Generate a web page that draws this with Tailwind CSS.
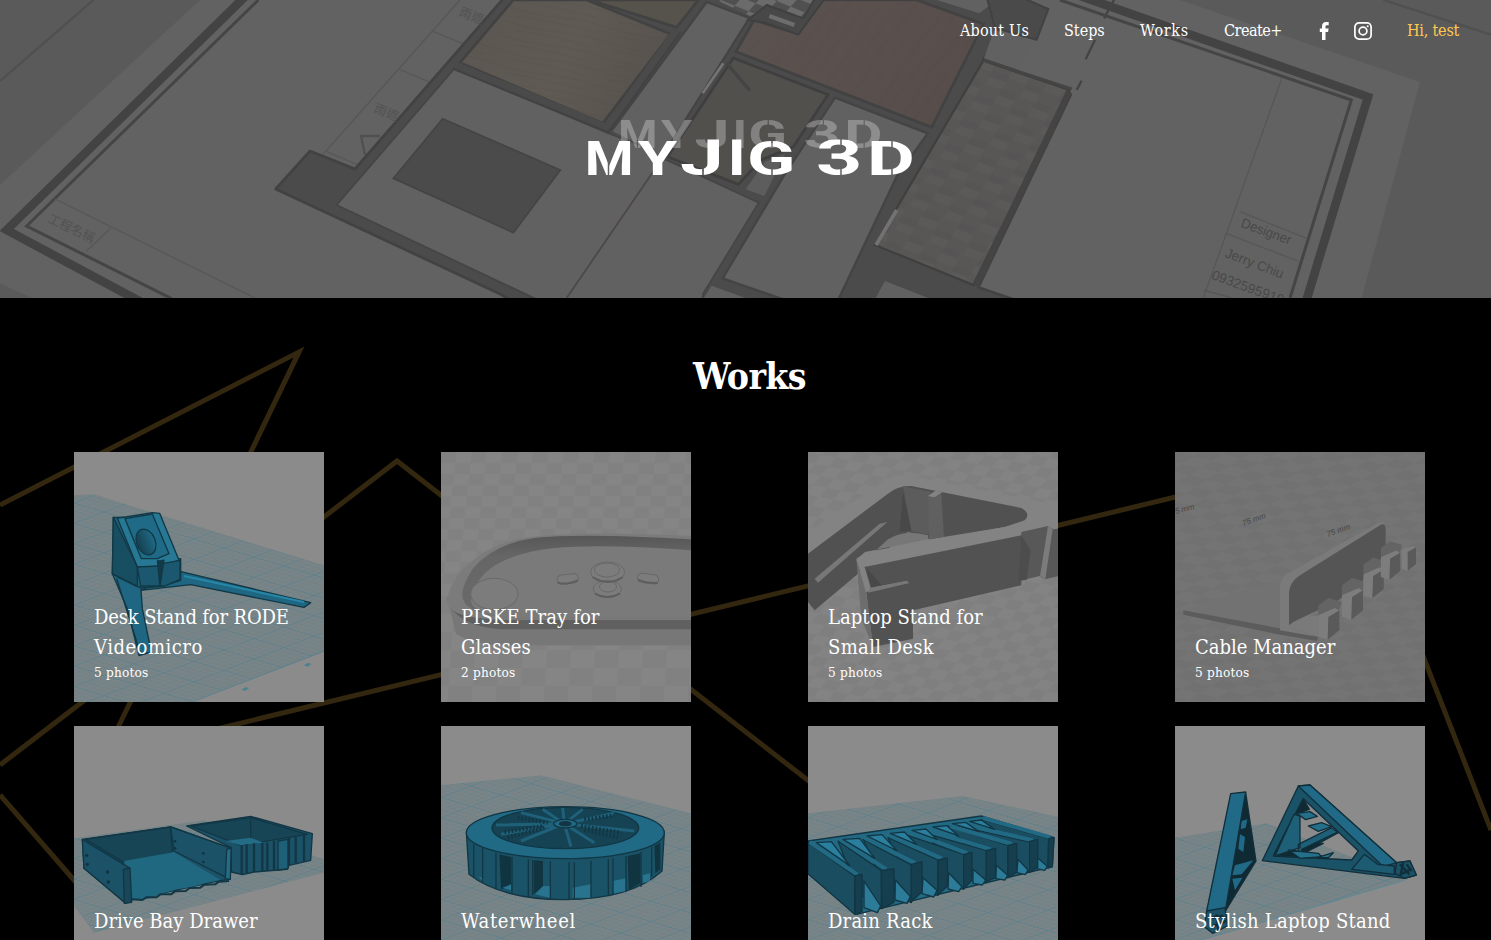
<!DOCTYPE html>
<html lang="en">
<head>
<meta charset="utf-8">
<title>MYJIG 3D - Works</title>
<script src="https://cdn.jsdelivr.net/npm/@tailwindcss/browser@4"></script>
</head>
<body class="bg-black text-white overflow-hidden h-[940px] font-['Roboto_Slab','DejaVu_Serif_Condensed','DejaVu_Serif',serif]">
<header class="relative h-[298px] overflow-hidden bg-[#626262]">
  <svg class="absolute inset-0" width="1491" height="298" viewBox="0 0 4473 894" fill="none">
    <defs>
      <linearGradient id="red" x1="0" y1="0" x2="1" y2=".4"><stop stop-color="#59534f"/><stop offset=".5" stop-color="#5a504d"/><stop offset="1" stop-color="#574d4b"/></linearGradient>
      <linearGradient id="oak" x1="0" y1="0" x2="1" y2=".3"><stop stop-color="#5b5651"/><stop offset=".6" stop-color="#5f5a54"/><stop offset="1" stop-color="#58534e"/></linearGradient>
      <pattern id="brick" width="110" height="84" patternUnits="userSpaceOnUse" patternTransform="rotate(20) skewX(-12)"><path fill="#595756" d="M0 0h110v84H0z"/><path fill="#5c5a59" d="M0 0h54v26H0zM60 42h50v24H60z"/><path fill="#565454" d="M56 20h54v20H56zM0 62h50v22H0z"/></pattern>
      <pattern id="grain" width="300" height="44" patternUnits="userSpaceOnUse" patternTransform="rotate(12)"><path stroke="#514a43" stroke-opacity=".16" stroke-width="6" d="M0 10q80 10 150 0t150 0M30 32q100-8 230 0"/></pattern>
      <pattern id="streak" width="300" height="80" patternUnits="userSpaceOnUse" patternTransform="rotate(-55)"><path stroke="#50423e" stroke-opacity=".09" stroke-width="14" d="M0 14q80 10 150 0t150 0M30 56q100-8 230 0"/></pattern>
      <pattern id="tile" width="90" height="60" patternUnits="userSpaceOnUse" patternTransform="rotate(22) skewX(-20)"><path fill="#6b6b6b" d="M0 0h90v60H0z"/><path fill="#505050" d="M0 0h45v30H0zM45 30h45v30H45z"/></pattern>
    </defs>
    <path fill="#5a5a5a" d="M0 0H600L0 555zM0 850l95 44H0zM3520 0H4473V894H4085L4260 246 3540 0z"/>
    <path stroke="#505050" stroke-width="7" d="M0 243L280 0M4150 0l323 104"/>
    <path stroke="#434343" stroke-width="26" d="M735-10L20 690 440 915M3240-12L4104 291 3918 905"/>
    <path stroke="#454545" stroke-width="9" d="M775 0L80 678 515 896M3180 0L4054 300 3870 894"/>
    <path stroke="#575757" stroke-width="4" d="M165 597l600 297M332 685l-72 68M1380 0L970 462M1300 94l95 40M1196 207l95 40M980 455l95 40M3845 236L3610 894M3720 635l200 80M3678 700l215 83M3610 870l90 25M3070 110l-50 90"/>
    <path stroke="#505050" stroke-width="7" d="M1140 408h-57l12 56"/>
    <!-- wall mass -->
    <path fill="#4b4b4b" stroke="#424242" stroke-width="8" stroke-linejoin="round" d="M930 453L827 567 1500 882 1540 905H3060L2935 862 3212 285 3200 266 2950 178 3010 70 3000-10H1515L1065 507z"/>
    <!-- living room and halls -->
    <path fill="#616161" stroke="#454545" stroke-width="5" d="M1363 206L1825 400 1990 465 1700 905H1625L1010 615z"/>
    <path fill="#616161" stroke="#454545" stroke-width="5" d="M1995 478L2276 608 2110 880 2105 905H1690L1975 475z"/>
    <path fill="#616161" d="M1800 395L2000 465 1700 900 1500 800z"/>
    <path fill="url(#oak)" stroke="#424242" stroke-width="8" d="M1540 0H1760L2012 102 1808 370 1380 188z"/>
    <path fill="url(#grain)" d="M1540 0H1760L2012 102 1808 370 1380 188z"/>
    <path fill="#56524c" stroke="#424242" stroke-width="8" d="M1770 0H2095L2030 82z"/>
    <path stroke="#4a4a4a" stroke-width="24" d="M1365 196L1822 384 2030 92"/>
    <path stroke="#424242" stroke-width="6" d="M1358 206L1825 397 2042 96"/>
    <path fill="#616161" d="M2120 6L2248 54 1988 468 1835 392z"/>
    <path stroke="#444" stroke-width="7" d="M1835 392L2120 6 2248 54 1988 468"/>
    <path fill="#52504d" stroke="#403f3f" stroke-width="8" d="M2200 174L2484 284 2380 440 2282 480 2215 553 2003 470z"/>
    <path stroke="#747474" stroke-width="8" d="M2170 190l-62 90"/>
    <path stroke="#444" stroke-width="10" d="M2180 190l70 82"/>
    <path fill="url(#red)" stroke="#424242" stroke-width="8" d="M2262 60L2390 100 2465 0H2750L2950 72 2795 382 2208 155z"/>
    <path fill="url(#streak)" d="M2465 0H2750L2950 72 2795 382 2208 155z"/>
    <path fill="url(#tile)" d="M2150 0H2440L2400 60 2310 20 2250 48z"/>
    <path fill="#484848" stroke="#404040" stroke-width="6" d="M2245 60L2300 15 2410 55 2445-5 2475-5 2395 104 2295 68z"/>
    <path stroke="#6d6d6d" stroke-width="12" d="M2308 48l75 27"/>
    <path fill="#616161" stroke="#444" stroke-width="7" d="M2505 293L2783 400 2690 530 2512 905H2370L2168 835 2350 530z"/>
    <path fill="#5d5d5d" d="M2295 485l60-22-62 125-56-20z"/>
    <path fill="#616161" d="M2135 857l110 40h-135zM2655 843l140 55h-170zM2810 0h180l-52 40z"/>
    <path fill="url(#brick)" stroke="#404040" stroke-width="7" d="M2950 182L3208 270 2920 855 2625 735z"/>
    <path fill="#4a4a4a" stroke="#424242" stroke-width="6" d="M2960-10h100l85 37-35 92-125-35z"/>
    <path fill="#616161" d="M2982 90l120 34-50 85-100-35z"/>
    <path stroke="#454545" stroke-width="9" d="M2950 180L3215 267"/>
    <path stroke="#444" stroke-width="18" d="M3207 275L2928 858"/>
    <path stroke="#727272" stroke-width="11" d="M2690 630l-62 105"/>
    <path stroke="#4c4646" stroke-width="5" d="M1990 470L1700 894"/>
    <path stroke="#444" stroke-width="7" d="M3342 0l-30 55M3285 120l-28 58M3245 242l-15 28"/>
    <path fill="#4b4b4b" stroke="#444" stroke-width="5" d="M1328 356L1681 510 1540 698 1180 535z"/>
    <g fill="#494949" font-family="Liberation Sans, sans-serif" font-size="41">
      <text transform="translate(3720 680) rotate(20)" textLength="158" lengthAdjust="spacingAndGlyphs">Designer</text>
      <text transform="translate(3673 770) rotate(21)" textLength="184" lengthAdjust="spacingAndGlyphs">Jerry Chiu</text>
      <text transform="translate(3632 836) rotate(20)" textLength="228" lengthAdjust="spacingAndGlyphs">0932595919</text>
    </g>
    <g fill="#525252" font-family="Noto Sans CJK TC, sans-serif" font-size="38">
      <text transform="translate(140 665) rotate(25)">工程名稱</text>
      <text transform="translate(1120 335) rotate(22)">雨遮</text>
      <text transform="translate(1375 45) rotate(22)">雨遮</text>
    </g>
  </svg>
  <nav class="relative flex h-[61px] items-center justify-end pr-8 text-[16px]">
    <a class="mr-[35px] w-[69px] whitespace-nowrap tracking-[0.2px]">About Us</a>
    <a class="mr-[35px] w-[41px] whitespace-nowrap">Steps</a>
    <a class="mr-[35px] w-[49px] whitespace-nowrap tracking-[0.7px]">Works</a>
    <a class="mr-[38px] w-[57px] whitespace-nowrap tracking-[-0.5px]">Create+</a>
    <svg class="mr-6" width="11" height="18" viewBox="0 0 11 18" fill="white"><path d="M3 18V10H.8V6.6H3V4.3C3 1.5 4.6 0 7.2 0H9.7V3.3H8C6.9 3.3 6.5 3.8 6.5 4.8V6.6H9.6L9.1 10H6.5V18z"/></svg>
    <svg class="mr-[35px]" width="18" height="18" viewBox="0 0 18 18" fill="none" stroke="white" stroke-width="1.7"><rect x=".9" y=".9" width="16.2" height="16.2" rx="4.2"/><circle cx="9" cy="9" r="3.9"/><circle cx="13.7" cy="4.3" r="1" fill="white" stroke="none"/></svg>
    <a class="w-[52px] whitespace-nowrap text-[#ffc84f] tracking-[-0.2px]">Hi, test</a>
  </nav>
  <svg class="absolute left-[588px] top-[110px]" width="335" height="76" fill="white" font-family="Roboto, sans-serif" font-weight="700" font-size="49">
    <defs>
      <mask id="stencil" maskUnits="userSpaceOnUse" x="-5" y="-40" width="340" height="50">
        <path fill="#fff" d="M-5-35.5h340V1H-5z"/>
        <path stroke="#000" stroke-width="1.5" d="M20.5-36V2M115-12V2M184-37v12M184-12V2M253-37v12M253-12V2M304-37v12M304-12V2"/>
      </mask>
      <g id="logo" mask="url(#stencil)">
        <text transform="translate(-3.3) scale(1.14 1)">M</text>
        <text transform="translate(50) scale(1.29 1)">Y</text>
        <text transform="translate(92) scale(1.6 1)">J</text>
        <text transform="translate(139.500) scale(1.28 1)">I</text>
        <text transform="translate(159) scale(1.45 1)">G</text>
        <text transform="translate(228) scale(1.65 1)">3</text>
        <text transform="translate(279) scale(1.5 1)">D</text>
      </g>
    </defs>
    <use href="#logo" transform="translate(33 38) scale(.8)" opacity=".28"/>
    <use href="#logo" transform="translate(0 65)"/>
  </svg>
</header>
<main class="relative h-[642px] overflow-hidden">
  <svg class="absolute inset-0" width="1491" height="642" viewBox="0 298 1491 642" fill="none" stroke="#33270f" stroke-width="5">
    <path d="M0 505L299 352 112 740M0 765L397 461 850 813M200 733L1345 456 1491 830M0 795L100 910"/>
  </svg>
  <div class="relative">
    <h1 class="pt-[50px] pl-[8px] text-center text-[37px] leading-[56px] font-bold tracking-[-0.6px]">Works</h1>
    <svg width="0" height="0" class="absolute">
      <defs>
        <pattern id="grid" width="90" height="90" patternUnits="userSpaceOnUse" patternTransform="matrix(1 .3 -1 .38 0 0)"><path fill="#7a8486" stroke="none" d="M0 0h90v90H0z"/><path stroke="#54808e" stroke-width="3" fill="none" d="M0 45h90M45 0v90"/><path stroke="#668189" stroke-width="1.7" fill="none" d="M0 9h90M0 27h90M0 63h90M0 81h90M9 0v90M27 0v90M63 0v90M81 0v90"/></pattern>
        <pattern id="check" width="92" height="66" patternUnits="userSpaceOnUse" patternTransform="skewX(-6)"><path fill="#858585" d="M0 0h92v66H0z"/><path fill="#818181" d="M0 0h46v33H0zM46 33h46v33H46z"/></pattern>
        <pattern id="checkbig" width="144" height="108" patternUnits="userSpaceOnUse" patternTransform="skewX(-4)"><path fill="#858585" d="M0 0h144v108H0z"/><path fill="#818181" d="M0 0h72v54H0zM72 54h72v54H72z"/></pattern>
        <pattern id="checkb" width="84" height="84" patternUnits="userSpaceOnUse" patternTransform="matrix(1 .2 -.55 .65 0 0)"><path fill="#838383" d="M0 0h84v84H0z"/><path fill="#7f7f7f" d="M0 0h42v42H0zM42 42h42v42H42z"/></pattern>
        <pattern id="checkc" width="110" height="84" patternUnits="userSpaceOnUse" patternTransform="matrix(1 .25 -.8 .5 0 0)"><path fill="#747474" d="M0 0h110v84H0z"/><path fill="#717171" d="M0 0h55v42H0zM55 42h55v42H55z"/></pattern>
        <linearGradient id="lip" x1="0" y1="0" x2="0" y2="1"><stop stop-color="#575757"/><stop offset=".25" stop-color="#666"/><stop offset="1" stop-color="#6a6a6a"/></linearGradient>
        <linearGradient id="hole"><stop stop-color="#153f4f"/><stop offset="1" stop-color="#1f6a86"/></linearGradient>
      </defs>
    </svg>
    <section class="ml-[74px] mt-[48px] grid w-[1351px] grid-cols-[repeat(4,250px)] justify-between gap-y-6">
      <article class="relative flex h-[250px] flex-col justify-end overflow-hidden bg-[#8b8b8b] p-5">
        <svg class="absolute inset-0" width="250" height="250" viewBox="0 0 750 750" fill="#1e6681" stroke="#123846" stroke-width="4" stroke-linejoin="round">
          <path fill="url(#grid)" stroke="none" d="M0 130L60 127 750 340V600L355 750H0z"/><path stroke="#4d808f" stroke-width="2" d="M355 750L750 597"/>
          <g stroke="none" fill="#4d808f"><path d="M690 640l12-8 10 4-12 8zM503 713l12-8 10 4-12 8z"/></g>
          <path d="M318 358L710 452 690 466 350 398 200 415z"/><path stroke="#2787a8" d="M330 372L690 450" stroke-width="6"/>
          <path d="M115 365L200 400 205 470 232 600 195 611 160 470z"/><path fill="none" d="M128 380l70 220"/>
          <path fill="#184e61" d="M118 196L190 402 115 365z"/><path fill="#1d5f78" d="M118 196L155 196 230 340 320 320V385L265 402 205 408 185 402 130 375z"/>
          <path fill="#267895" d="M130 198L155 195 235 182 257 184 315 325 250 345 190 345z"/>
          <path fill="#184e61" d="M118 196L190 345V402L115 365z"/><path fill="#1f6a86" d="M153 200L202 320 250 320 285 305 235 186z"/>
          <ellipse cx="216" cy="270" rx="28" ry="40" transform="rotate(-22 216 270)" fill="url(#hole)"/>
          <path fill="#1b5870" d="M190 345L250 342 265 335 318 325V382L272 402H200z"/><path d="M250 325l8 78 12-80" fill="#123a49"/>
        </svg>
        <h2 class="relative text-[20px] leading-[30px] tracking-[-0.15px] whitespace-nowrap">Desk Stand for RODE<br><span class="tracking-[0.5px]">Videomicro</span></h2>
        <p class="relative text-[13.5px] leading-5 tracking-[0.2px]">5 photos</p>
      </article>
      <article class="relative flex h-[250px] flex-col justify-end overflow-hidden bg-[#858585] p-5">
        <svg class="absolute inset-0" width="250" height="250" viewBox="0 0 750 750" fill="none">
          <path fill="url(#check)" d="M0 0h750v400H0z"/><path fill="url(#checkbig)" d="M0 400h750v350H0z"/>
          <path fill="#777" d="M20 440L45 545Q100 585 260 580H750V480z"/><path fill="#606060" d="M18 440Q40 520 180 532H750V480z"/>
          <path fill="#7b7b7b" d="M750 252Q420 235 260 256 130 275 50 370 0 450 30 470 60 505 240 504H750z"/>
          <path fill="url(#lip)" d="M750 262Q420 242 280 258 160 275 95 350 50 420 70 450 90 490 240 500H750z"/>
          <path fill="#7a7a7a" d="M750 295Q480 275 340 288 190 305 130 365 75 430 95 460 120 495 240 500H750z"/>
          <g fill="#7c7c7c" stroke="#696969" stroke-width="3"><ellipse cx="160" cy="426" rx="71" ry="47"/><ellipse cx="500" cy="361" rx="51" ry="31"/><ellipse cx="498" cy="354" rx="38" ry="21"/><ellipse cx="499" cy="411" rx="42" ry="26"/><ellipse cx="501" cy="404" rx="26" ry="16"/><rect x="348" y="367" width="64" height="28" rx="14" transform="rotate(-7 380 380)"/><rect x="589" y="366" width="64" height="28" rx="14" transform="rotate(7 620 380)"/></g>
          <path stroke="#5e5e5e" stroke-width="6" d="M350 391q20 10 60-6M592 383q25 12 58 10M455 375q45 30 90 0M462 425q35 20 75 0"/>
        </svg>
        <h2 class="relative text-[20px] leading-[30px] tracking-[0.1px] whitespace-nowrap">PISKE Tray for<br>Glasses</h2>
        <p class="relative text-[13.5px] leading-5 tracking-[0.2px]">2 photos</p>
      </article>
      <article class="relative flex h-[250px] flex-col justify-end overflow-hidden bg-[#808080] p-5">
        <svg class="absolute inset-0" width="250" height="250" viewBox="0 0 750 750">
          <path fill="url(#checkb)" d="M0 0h750v750H0z"/>
          <path fill="#838383" d="M0 240L240 80Q270 65 310 72L750 160V230L640 245 175 420 145 320 0 310z"/>
          <path fill="#515151" d="M0 305L240 125Q270 100 310 102L640 168Q670 185 650 205L590 225 365 262 300 240 150 365 20 475 0 450z"/>
          <path fill="#777" d="M240 262Q290 230 360 250V262L170 300 145 325 150 345z"/>
          <path fill="#5c5c5c" d="M285 103L370 120 362 247 310 238z"/><path fill="#484848" d="M285 120L310 235 275 240z"/><path fill="#606060" d="M360 130l40-6 8 130-45 8z"/><path fill="#838383" d="M360 132l22-16 22 4-25 16z"/>
          <path fill="#777" d="M20 380L215 215 238 210 30 392z"/>
          <path fill="#838383" d="M145 320L175 300 620 220 645 248 170 345 185 415 175 425z"/>
          <path fill="#525252" d="M170 345L640 250V400L315 475V560L195 585 175 420 300 392 298 386 188 408z"/>
          <path fill="#6d6d6d" d="M145 320L175 425 195 585 160 500z"/><path fill="#484848" d="M175 348l45 50-30 8z"/><path fill="#777" d="M185 408L295 387 305 393 180 422z"/>
          <path fill="#585858" d="M640 240L720 222 735 232 750 230V373L710 382 695 372 632 387z"/><path fill="#4d4d4d" d="M640 250l28 45-12 88-25 4z"/><path fill="#7b7b7b" d="M720 222l14 10-22 150-16-10z"/>
        </svg>
        <h2 class="relative text-[20px] leading-[30px] whitespace-nowrap">Laptop Stand for<br><span class="tracking-[0.35px]">Small Desk</span></h2>
        <p class="relative text-[13.5px] leading-5 tracking-[0.2px]">5 photos</p>
      </article>
      <article class="relative flex h-[250px] flex-col justify-end overflow-hidden bg-[#737373] p-5">
        <svg class="absolute inset-0" width="250" height="250" viewBox="0 0 750 750">
          <path fill="url(#checkc)" d="M0 0h750v750H0z"/>
          <path fill="#727272" d="M30 470L320 380V530z"/><path fill="#5c5c5c" d="M25 475L320 530 430 553 425 567 300 545 25 488z"/>
          <path fill="#7a7a7a" d="M315 400Q318 370 350 358L610 212Q630 205 632 225V330L350 530 430 555 315 535z"/>
          <path fill="#555" d="M342 520V420Q345 390 375 370L615 220Q630 210 632 230V330L490 445 355 510z"/>
          <path fill="#7a7a7a" d="M340 525l70-35 70 10-40 58z"/>
          <g><g id="clip"><path fill="#646464" d="M430 460l30-22 40 12-10 30-60 10z"/><path fill="#7d7d7d" d="M430 490l50-22 13 8-30 20-5 68-28-10z"/><path fill="#5a5a5a" d="M460 495l33-20v60l-35 28z"/></g><use href="#clip" x="71" y="-60"/><use href="#clip" transform="translate(148 -108) scale(.97)"/><use href="#clip" transform="translate(222 -135) scale(.92)"/></g>
          <path fill="#7d7d7d" d="M680 292l38-10 5 5v48l-25 22-18-6z"/><path fill="#5a5a5a" d="M698 300l25-14v50l-25 20z"/>
          <g fill="#454545" font-size="24" font-style="italic" font-family="Liberation Sans"><text transform="translate(205 222) rotate(-20)">75 mm</text><text transform="translate(458 255) rotate(-20)">75 mm</text><text transform="translate(2 186) rotate(-15)">5 mm</text></g>
        </svg>
        <h2 class="relative text-[20px] leading-[30px] whitespace-nowrap">Cable Manager</h2>
        <p class="relative text-[13.5px] leading-5 tracking-[0.2px]">5 photos</p>
      </article>
      <article class="relative flex h-[250px] flex-col justify-end overflow-hidden bg-[#8b8b8b] p-5">
        <svg class="absolute inset-0" width="250" height="250" viewBox="0 0 750 750" fill="#1b5268" stroke="#123644" stroke-width="4" stroke-linejoin="round">
          <path fill="url(#grid)" stroke="none" d="M0 337L390 283 750 400V440L60 620 0 540z"/>
          <path d="M25 340L290 303 472 367 468 460 430 465 170 522 155 532 30 427z"/>
          <path fill="#174555" d="M35 340L290 303 295 380 150 410z"/><path fill="#206780" stroke="none" d="M150 405L300 378 440 462 400 470 350 484 310 490 260 504 225 518 175 520z"/>
          <path d="M290 303L472 367 468 460 300 375zM25 340L165 425 155 532 30 427z"/><path fill="#184759" d="M148 430l20-4 5 103-22 3z"/><path d="M458 370l14-4-3 94-15-2z" fill="#246b85"/>
          <path fill="none" stroke-width="6" d="M175 520l30 2 12-8 30 0 12-9 32 0 12-9 32-1 12-9 32-1 12-9 32-1 12-8 30-2"/>
          <path d="M338 300L530 271 715 323 710 403 645 418 640 430 612 432 540 438 505 446 472 438 472 365z"/><path fill="#174555" d="M350 300L530 275 700 325 500 358z"/><path fill="#246b85" stroke="none" d="M455 345L530 335 570 350 500 358z"/><path fill="none" d="M530 275v60"/>
          <path stroke-width="7" fill="none" d="M503 360v84M518 355v86M540 352v85M565 350v85M580 350v82M600 345v86M645 335v83M665 330v80M690 326v80"/><path fill="#1e6078" d="M612 345l30-5v88l-30 4z"/>
          <g stroke="none" fill="#103340"><circle cx="38" cy="388" r="5"/><circle cx="40" cy="415" r="5"/><circle cx="101" cy="438" r="5"/><circle cx="103" cy="468" r="5"/><circle cx="303" cy="346" r="4"/><circle cx="303" cy="367" r="4"/><circle cx="388" cy="382" r="4"/><circle cx="388" cy="408" r="4"/></g>
        </svg>
        <h2 class="relative text-[20px] leading-[30px] whitespace-nowrap">Drive Bay Drawer</h2>
        <p class="relative text-[13.5px] leading-5">5 photos</p>
      </article>
      <article class="relative flex h-[250px] flex-col justify-end overflow-hidden bg-[#8b8b8b] p-5">
        <svg class="absolute inset-0" width="250" height="250" viewBox="0 0 750 750" fill="#1d6079" stroke="#123644" stroke-width="4" stroke-linejoin="round">
          <path fill="url(#grid)" stroke="none" d="M0 177L300 148 750 262V750H0z"/>
          <path fill="#1a5367" d="M76 318L84 445Q180 520 370 521 570 520 663 435L670 318z"/>
          <g stroke="none" fill="#103440"><path d="M175 385l35 8v85l-30 12zM278 403l28 2v75l-28 25zM560 390l38-8v90l-35 20zM640 360l18-10v80l-15 12z"/></g>
          <g stroke="none" fill="#28748f"><path d="M282 505l25-25h22v36zM395 485l55-10v40h-55zM515 465l40-8v38l-38 8zM605 448l22-6v22l-20 8zM185 485l25-10v18zM112 450l15 8v10z"/></g>
          <path fill="none" d="M98 355v100M125 365v105M165 380v110M213 392v108M262 400v112M275 402v105M328 406v112M384 408v112M400 408v112M450 405v112M502 398v112M516 396v108M555 390v108M600 378v105M632 362v90"/>
          <ellipse cx="373" cy="320" rx="297" ry="78" fill="#206a86"/><ellipse cx="373" cy="306" rx="220" ry="62" fill="#154353"/>
          <g fill="none" stroke="#1f617a" stroke-width="9"><path d="M370 293L240 260M370 293L165 297M370 293L240 345M370 293L390 362M370 293L460 350M370 293L580 315M370 293L520 262M370 293L425 250M370 293L365 246M370 293L305 250M370 293L180 325"/></g>
          <path fill="none" stroke="#123644" stroke-width="12" stroke-dasharray="5 6" d="M190 318L310 300M200 335l110-30M420 300l120 20M430 312l100 22M430 280l90-12M230 275l90 15"/>
          <ellipse cx="373" cy="293" rx="35" ry="13" fill="#206a86"/><ellipse cx="373" cy="293" rx="17" ry="6" fill="#123644"/>
        </svg>
        <h2 class="relative text-[20px] leading-[30px] tracking-[0.7px] whitespace-nowrap">Waterwheel</h2>
        <p class="relative text-[13.5px] leading-5">5 photos</p>
      </article>
      <article class="relative flex h-[250px] flex-col justify-end overflow-hidden bg-[#8b8b8b] p-5">
        <svg class="absolute inset-0" width="250" height="250" viewBox="0 0 750 750" fill="#1a4d60" stroke="#123644" stroke-width="4" stroke-linejoin="round">
          <path fill="url(#grid)" stroke="none" d="M0 262L465 210 750 272V750H0z"/>
          <path fill="#226a84" d="M0 345L520 270 738 335 733 422 145 565 0 443z"/>
          <g fill="#1a4d60"><path d="M520 280L722 338 720 422 640 395z"/><path d="M450 300L665 348V440L590 400z"/><path d="M420 300L600 358V455L520 410z"/><path d="M345 320L535 373V470L450 420z"/><path d="M290 325L467 385V490L390 440z"/><path d="M240 335L390 402V508L300 460z"/><path d="M165 340L310 417V530L230 480z"/><path d="M90 345L220 433V548L150 500z"/><path d="M0 350L140 450V565L0 443z"/></g>
          <g fill="none" stroke="#226a84" stroke-width="12"><path d="M5 348L148 446M100 342L235 430M170 335L322 412M245 328L402 398M310 318L478 382M350 310L548 370M425 300L612 354M455 293L675 343M525 276L728 334"/></g>
          <g fill="#2a7e9e"><path d="M25 350l45-3 55 72zM105 340l50-3 45 60zM177 330l45-4 45 48zM247 322l42-4 38 38zM312 313l42-4 34 32zM375 303l42-4 34 30zM433 293l40-4 40 28zM485 286l35-4 40 28z"/></g>
          <g fill="#2c7b98"><path d="M168 465l50 75-10 20-40-15zM262 462l45 50-10 20-36-10zM345 455l42 38-10 20-35-10zM422 440l40 42-10 15-32-8zM495 430l38 32-10 15-28-5zM565 418l34 30-8 14-28-4zM630 400l30 32-8 14-26-6zM688 395l30 26-8 12-24-5z"/></g>
          <g fill="#153f4f"><path d="M140 450l22-5v112l-20 8zM220 433l38-4v100l-36 18zM310 415l32-8v90l-32 30zM390 402l28-6v85l-28 25zM467 385l25-6v84l-25 25zM535 373l28-6v88l-28 12zM600 358l26-6v87l-26 15zM665 346l24-6v84l-24 14zM722 338l16-4-5 88-13 4z"/></g>
        </svg>
        <h2 class="relative text-[20px] leading-[30px] tracking-[0.2px] whitespace-nowrap">Drain Rack</h2>
        <p class="relative text-[13.5px] leading-5">5 photos</p>
      </article>
      <article class="relative flex h-[250px] flex-col justify-end overflow-hidden bg-[#8b8b8b] p-5">
        <svg class="absolute inset-0" width="250" height="250" viewBox="0 0 750 750" fill="#206a87" stroke="#112f3b" stroke-width="4" stroke-linejoin="round">
          <path fill="url(#grid)" stroke="none" d="M0 335L275 292 700 460 80 642H0z"/><path stroke="#4d8a9b" stroke-width="2" d="M80 642L690 463"/>
          <path fill="#102a34" d="M212 200L243 405 145 565z"/><path stroke="none" d="M200 285l17-5-5 25-15 5zM195 325l15 8-5 45-15-10zM180 418l55-15-35 42-28 3zM172 458l30-3-22 38z"/>
          <path d="M167 203L212 198 150 560 95 555z"/><path fill="#1b5268" d="M95 555l55-10 8 55-45 22-25-20z"/><path stroke-width="8" fill="none" d="M110 575l35-5M115 600l38-15M125 565l5 45"/>
          <path fill-rule="evenodd" fill="#1a5267" d="M370 180L405 177 665 410 705 405 724 447 688 457 262 404zM385 218L295 390 530 402 550 375z"/>
          <path fill="#102a34" d="M385 218l18 32-42 15zM357 268v85l-60 32zM300 390l50-25 30 28z"/>
          <path fill="#1e6078" d="M357 265l18 5v95l-75 25zM370 355l100-50 20 15-120 65z"/><path fill="#102a34" d="M380 370l105-50-60 30 20 2-60 30z"/>
          <path fill="#246f8a" d="M365 262l40-5 22 14-35 10zM400 300l40-10 30 12-40 14zM340 372l90 10 10 10-65 5zM425 395l50-15-15 15z"/><path fill="#206a87" d="M370 180L405 177 665 410 625 422z"/>
          <path fill="#1d5b72" d="M530 430l38-45 40 30 50 5v25z"/><path fill="#1b5268" d="M665 410l40-5 19 42-36 10-28-15z"/><path fill="none" stroke-width="7" d="M675 415l28 30M685 410l-8 35 30-15M695 415l15 20"/>
        </svg>
        <h2 class="relative text-[20px] leading-[30px] tracking-[0.25px] whitespace-nowrap">Stylish Laptop Stand</h2>
        <p class="relative text-[13.5px] leading-5">5 photos</p>
      </article>
    </section>
  </div>
</main>
</body>
</html>
